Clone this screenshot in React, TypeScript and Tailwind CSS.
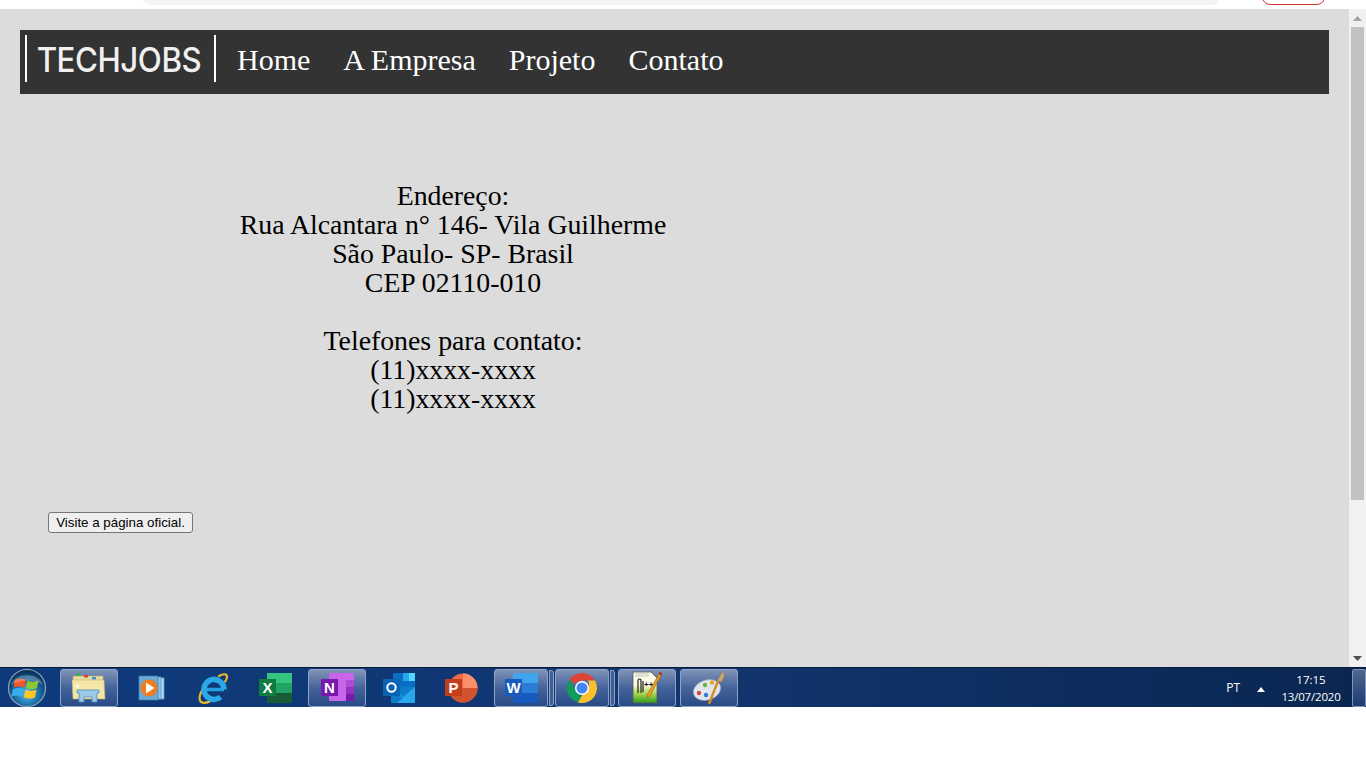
const SERIF = "font-['Liberation_Serif',serif]"

function TaskButton({ active, stacked, w, children }: { active?: boolean; stacked?: boolean; w?: string; children: React.ReactNode }) {
  return (
    <div className={`relative flex h-[38px] items-center justify-center rounded-[3px] ${w ?? 'w-[58px]'} ${active ? 'border border-[#8fa3c4] bg-gradient-to-b from-[#8093b8] via-[#45639a] to-[#274a86]' : ''}`}>
      {children}
      {stacked && <div className="absolute right-[-7px] top-0 h-[36px] w-[5px] rounded-r-[3px] border border-[#8fa3c4] bg-[#3f5e95]" />}
    </div>
  )
}

function StartOrb() {
  return (
    <svg width="40" height="40" viewBox="0 0 40 40">
      <defs>
        <radialGradient id="orb" cx="50%" cy="65%" r="60%">
          <stop offset="0" stopColor="#58c4ec" />
          <stop offset="0.55" stopColor="#1c6ea8" />
          <stop offset="1" stopColor="#0b3058" />
        </radialGradient>
      </defs>
      <circle cx="20" cy="20" r="18.500" fill="url(#orb)" stroke="#8fa8be" strokeWidth="1.200" />
      <path d="M8 12c3.500-1.800 7-1.800 11 0l-1.700 7.500c-3.500-1.500-7-1.500-11 0z" fill="#f0562a" />
      <path d="M20.500 12.500c3.500 1.800 7 1.800 11 .3l-1.700 7.500c-3.500 1.400-7 1.200-11-.3z" fill="#8cc832" />
      <path d="M6 21c3.500-1.500 7-1.500 11 0l-1.700 7.500c-3.500-1.500-7-1.500-11 0z" fill="#38aef0" />
      <path d="M18.500 21.500c3.500 1.800 7 1.800 11 .3L27.800 29.500c-3.500 1.400-7 1.200-11-.3z" fill="#fbc523" />
      <path d="M4 17C8 4 32 4 36 17 28 11 12 11 4 17z" fill="#fff" opacity="0.25" />
    </svg>
  )
}

function FolderIcon() {
  return (
    <svg width="34" height="31" viewBox="0 0 34 31">
      <path d="M1 4h30v5H1z" fill="#e9dca0" stroke="#b9a868" strokeWidth="0.6" />
      <rect x="4" y="1.500" width="4" height="2.500" fill="#3fae49" />
      <rect x="12" y="3" width="4" height="2.500" fill="#c9453a" />
      <rect x="20" y="5" width="4" height="2.500" fill="#3b8fd6" />
      <path d="M0 8h32l1 19H1z" fill="#f4e6a6" stroke="#c4b26e" strokeWidth="0.6" />
      <path d="M5 18h22v3h-2v9h-5v-5h-8v5H7v-9H5z" fill="#9cc8e8" stroke="#4c8cba" strokeWidth="0.8" />
      <path d="M5 12l3 3-3 1-2-2z" fill="#fff" opacity="0.8" />
    </svg>
  )
}

function MediaIcon() {
  return (
    <svg width="27" height="26" viewBox="0 0 27 26">
      <rect x="19" y="3" width="7" height="21" fill="#a9d3ee" stroke="#6aa4cc" strokeWidth="0.7" />
      <rect x="16" y="2" width="7" height="22" fill="#8cc4e8" stroke="#5a9ac6" strokeWidth="0.7" />
      <rect x="1" y="1" width="19" height="24" fill="#6ba9d6" stroke="#3f7fb0" strokeWidth="0.7" />
      <circle cx="11" cy="13" r="8.500" fill="#f07a1c" />
      <path d="M8 7.500l8.500 5.500L8 18.500z" fill="#fff" />
    </svg>
  )
}

function IeIcon() {
  return (
    <svg width="32" height="32" viewBox="0 0 32 32">
      <path d="M12 9C5 16 0 26 4 30c3 1.500 7 .5 10-1.500M22 4c4-2.500 8-2.500 8 1 0 1.500-.8 3-1.800 4.500" fill="none" stroke="#e8b928" strokeWidth="2.200" strokeLinecap="round" />
      <path d="M7 17.500h20" stroke="#22a0e2" strokeWidth="3.500" />
      <path d="M27 17.500a10 10 0 1 0-3.500 7.500" fill="none" stroke="#2aa8e8" strokeWidth="5.500" />
    </svg>
  )
}

function OfficeIcon({ letter, tile, cells }: { letter: string; tile: string; cells: string[] }) {
  return (
    <svg width="33" height="30" viewBox="0 0 33 30">
      <rect x="8" y="0" width="25" height="10" fill={cells[0]} />
      <rect x="8" y="10" width="25" height="10" fill={cells[1]} />
      <rect x="8" y="20" width="25" height="10" fill={cells[2]} />
      <rect x="0" y="6" width="17" height="17" fill={tile} />
      <text x="8.500" y="20" textAnchor="middle" fontSize="15" fontWeight="700" fontFamily="Liberation Sans, sans-serif" fill="#fff">{letter}</text>
    </svg>
  )
}

function OneNoteIcon() {
  return (
    <svg width="33" height="30" viewBox="0 0 33 30">
      <rect x="8" y="0" width="25" height="28" rx="1" fill="#ca64ea" />
      <rect x="25" y="7" width="8" height="7" fill="#ae4bd5" />
      <rect x="25" y="14" width="8" height="7" fill="#9332bf" />
      <rect x="25" y="21" width="8" height="7" fill="#7719aa" />
      <rect x="0" y="6" width="17" height="17" fill="#7719aa" />
      <text x="8.500" y="20" textAnchor="middle" fontSize="15" fontWeight="700" fontFamily="Liberation Sans, sans-serif" fill="#fff">N</text>
    </svg>
  )
}

function OutlookIcon() {
  return (
    <svg width="33" height="30" viewBox="0 0 33 30">
      <rect x="10" y="0" width="22" height="16" fill="#0a6fc4" />
      <rect x="20" y="0" width="7" height="8" fill="#28a8ea" />
      <rect x="26" y="0" width="6" height="8" fill="#50d9ff" />
      <path d="M8 14l24 0v16H8z" fill="#0f7cc9" />
      <path d="M8 14l12 9 12-9v3l-12 9-12-9z" fill="#1490df" />
      <path d="M32 14v16H14z" fill="#28a8ea" />
      <rect x="0" y="6" width="17" height="17" fill="#0a64b4" />
      <circle cx="8.500" cy="14.500" r="4.200" fill="none" stroke="#fff" strokeWidth="2" />
    </svg>
  )
}

function PptIcon() {
  return (
    <svg width="33" height="30" viewBox="0 0 33 30">
      <circle cx="18" cy="15" r="14.500" fill="#ed6c47" />
      <path d="M18 .5A14.500 14.500 0 0 1 32.500 15H18z" fill="#ff8f6b" />
      <path d="M3.500 15A14.500 14.500 0 0 0 32.500 15z" fill="#d35230" />
      <rect x="0" y="6" width="17" height="17" fill="#c43e1c" />
      <text x="8.500" y="20" textAnchor="middle" fontSize="15" fontWeight="700" fontFamily="Liberation Sans, sans-serif" fill="#fff">P</text>
    </svg>
  )
}

function ChromeIcon() {
  return (
    <svg width="32" height="32" viewBox="0 0 32 32">
      <path d="M16 1a15 15 0 0 1 13 7.500H16a7.500 7.500 0 0 0-6.500 3.750L3.600 7.500A15 15 0 0 1 16 1z" fill="#db4437" />
      <path d="M3.600 7.500l6 10.500a7.500 7.500 0 0 0 6.400 5.500l-4 7A15 15 0 0 1 3.600 7.500z" fill="#0f9d58" />
      <path d="M29 8.500A15 15 0 0 1 12 30.500l6.500-11.200A7.500 7.500 0 0 0 22 8.500z" fill="#fbc02d" />
      <circle cx="16" cy="16" r="7" fill="#fff" />
      <circle cx="16" cy="16" r="5.500" fill="#4285f4" />
    </svg>
  )
}

function NotepadIcon() {
  return (
    <svg width="31" height="33" viewBox="0 0 31 33">
      <defs>
        <linearGradient id="npp" x1="0" y1="0" x2="0" y2="1">
          <stop offset="0.4" stopColor="#fbfbe8" />
          <stop offset="0.72" stopColor="#a4d04a" />
          <stop offset="1" stopColor="#2f9a1e" />
        </linearGradient>
      </defs>
      <path d="M1 1h18l6 6v25H1z" fill="url(#npp)" stroke="#555" strokeWidth="0.8" />
      <path d="M3 3h14M3 5h14" stroke="#9aa" strokeWidth="0.6" />
      <path d="M6 22V9.500a1.500 1.500 0 0 1 3 0V22M11 21V10" fill="none" stroke="#111" strokeWidth="1.100" />
      <text x="12" y="16" fontSize="8" fontWeight="700" fontFamily="Liberation Sans, sans-serif" fill="#111">++</text>
      <path d="M28 1l2 1.500L18 25l-3 2 .3-3.500z" fill="#e8a020" stroke="#7a5510" strokeWidth="0.5" />
      <path d="M28 1l2 1.500-1 2-2-1.500z" fill="#a8242c" />
    </svg>
  )
}

function PaintIcon() {
  return (
    <svg width="33" height="34" viewBox="0 0 33 34">
      <ellipse cx="14" cy="19" rx="14" ry="10" transform="rotate(-18 14 19)" fill="#dfe6ec" stroke="#9aa8b4" strokeWidth="0.6" />
      <circle cx="6" cy="22" r="2.200" fill="#d9473c" />
      <circle cx="12" cy="14" r="2.200" fill="#6fb43a" />
      <circle cx="19" cy="11.500" r="2.200" fill="#e8a62a" />
      <circle cx="13" cy="24" r="2.200" fill="#2f7fd0" />
      <path d="M25 10L16 33" stroke="#d88a24" strokeWidth="2.400" />
      <path d="M24 10l4-7 3-3c1 3 0 7-2.500 11z" fill="#c8a878" stroke="#8a6a3a" strokeWidth="0.5" />
    </svg>
  )
}

function Taskbar() {
  return (
    <div className="flex h-[40px] shrink-0 items-center border-t border-t-[#0b1c38] bg-gradient-to-r from-[#0e3a7c] via-[#11366f] to-[#0a2650] pl-[7px]">
      <StartOrb />
      <div className="ml-[13px] flex items-center gap-[4px]">
        <TaskButton active><FolderIcon /></TaskButton>
        <TaskButton><MediaIcon /></TaskButton>
        <TaskButton><IeIcon /></TaskButton>
        <TaskButton><OfficeIcon letter="X" tile="#107c41" cells={['#33c481', '#21a366', '#185c37']} /></TaskButton>
        <TaskButton active><OneNoteIcon /></TaskButton>
        <TaskButton><OutlookIcon /></TaskButton>
        <TaskButton><PptIcon /></TaskButton>
        <TaskButton active stacked w="w-[54px]"><OfficeIcon letter="W" tile="#185abd" cells={['#41a5ee', '#2b7cd3', '#185abd']} /></TaskButton>
      </div>
      <div className="ml-[7px] flex items-center gap-[4px]">
        <TaskButton active stacked w="w-[54px]"><ChromeIcon /></TaskButton>
        <div className="w-[1px]" />
        <TaskButton active><NotepadIcon /></TaskButton>
        <TaskButton active><PaintIcon /></TaskButton>
      </div>
      <div className="ml-auto flex items-center font-['Open_Sans',sans-serif] text-white">
        <span className="text-[12px]">PT</span>
        <svg className="ml-[17px] mt-[4px]" width="8" height="5" viewBox="0 0 8 5"><path d="M4 0l4 5H0z" fill="#fff" /></svg>
        <div className="ml-[14px] flex w-[64px] flex-col items-center text-[11.5px] leading-[17px]">
          <span>17:15</span>
          <span className="tracking-[-0.2px]">13/07/2020</span>
        </div>
        <div className="ml-[9px] h-[38px] w-[14px] rounded-[2px] border border-[#7f93b8] bg-gradient-to-b from-[#51678e] to-[#1b3c74]" />
      </div>
    </div>
  )
}

function Scrollbar() {
  return (
    <div className="flex w-[17px] shrink-0 flex-col items-center bg-[#f1f1f1]">
      <div className="flex h-[18px] w-full items-center justify-center">
        <svg width="9" height="5" viewBox="0 0 9 5"><path d="M4.500 0L9 5H0z" fill="#a3a3a3" /></svg>
      </div>
      <div className="h-[473px] w-[13px] bg-[#c1c1c1]" />
      <div className="flex-1" />
      <div className="flex h-[18px] w-full items-center justify-center">
        <svg width="9" height="5" viewBox="0 0 9 5"><path d="M0 0h9L4.500 5z" fill="#505050" /></svg>
      </div>
    </div>
  )
}

function Navbar() {
  return (
    <nav className="mx-[20px] mt-[21px] flex h-[64px] items-start bg-[#333333] pl-[5px] text-white">
      <div className="mt-[5px] flex h-[47px] w-[191px] items-center justify-center border-x-2 border-white">
        <span className="mt-[3px] -translate-x-[1.5px] scale-x-[0.92] font-['Inter',sans-serif] text-[34px] font-medium leading-none tracking-[-0.5px] text-[#f0f0f0]">TECHJOBS</span>
      </div>
      <ul className={`ml-[21px] mt-[15px] flex gap-[33px] text-[30px] leading-[30px] ${SERIF}`}>
        <li>Home</li>
        <li>A Empresa</li>
        <li>Projeto</li>
        <li>Contato</li>
      </ul>
    </nav>
  )
}

export default function App() {
  return (
    <div className="flex h-[768px] w-[1366px] flex-col overflow-hidden bg-white">
      <div className="relative h-[9px] shrink-0 bg-white">
        <div className="absolute left-[143px] top-[-10px] h-[15px] w-[1077px] rounded-b-[8px] bg-[#f1f3f4]" />
        <div className="absolute left-[1262px] top-[-10px] h-[15px] w-[63px] rounded-b-[8px] border border-[#d0342c] bg-white" />
      </div>
      <div className="flex h-[658px] shrink-0 bg-[#dcdcdc]">
        <main className="min-w-0 flex-1">
          <Navbar />
          <section className={`mt-[87px] w-[906px] text-center text-[27.8px] leading-[29px] text-black ${SERIF}`}>
            <p>Endereço:</p>
            <p>Rua Alcantara n° 146- Vila Guilherme</p>
            <p>São Paulo- SP- Brasil</p>
            <p>CEP 02110-010</p>
            <br />
            <p>Telefones para contato:</p>
            <p>(11)xxxx-xxxx</p>
            <p>(11)xxxx-xxxx</p>
          </section>
          <button className="ml-[48px] mt-[99px] flex h-[21px] w-[145px] items-center justify-center rounded-[3px] border border-[#767676] bg-[#efefef] font-['Liberation_Sans',sans-serif] text-[13.33px] text-black">
            Visite a página oficial.
          </button>
        </main>
        <Scrollbar />
      </div>
      <Taskbar />
    </div>
  )
}
